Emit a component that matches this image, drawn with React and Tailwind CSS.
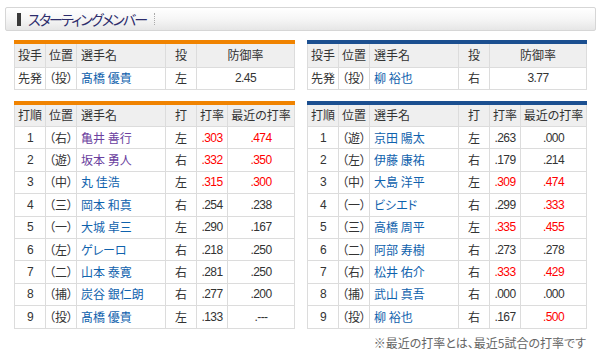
import React from "react";

const blue = "text-[#0f62ad]";
const purple = "text-[#6b3fa0]";

const leftBat = [
  ["1", "（右）", "亀井 善行", "左", ".303", ".474", true, true, true],
  ["2", "（遊）", "坂本 勇人", "右", ".332", ".350", true, true, true],
  ["3", "（中）", "丸 佳浩", "左", ".315", ".300", false, true, true],
  ["4", "（三）", "岡本 和真", "右", ".254", ".238", false, false, false],
  ["5", "（一）", "大城 卓三", "左", ".290", ".167", false, false, false],
  ["6", "（左）", "ゲレーロ", "右", ".218", ".250", false, false, false],
  ["7", "（二）", "山本 泰寛", "右", ".281", ".250", false, false, false],
  ["8", "（捕）", "炭谷 銀仁朗", "右", ".277", ".200", false, false, false],
  ["9", "（投）", "髙橋 優貴", "左", ".133", ".---", false, false, false],
];
const rightBat = [
  ["1", "（遊）", "京田 陽太", "左", ".263", ".000", false, false, false],
  ["2", "（左）", "伊藤 康祐", "右", ".179", ".214", false, false, false],
  ["3", "（中）", "大島 洋平", "左", ".309", ".474", false, true, true],
  ["4", "（一）", "ビシエド", "右", ".299", ".333", false, false, true],
  ["5", "（三）", "高橋 周平", "左", ".335", ".455", false, true, true],
  ["6", "（二）", "阿部 寿樹", "右", ".273", ".278", false, false, false],
  ["7", "（右）", "松井 佑介", "右", ".333", ".429", false, true, true],
  ["8", "（捕）", "武山 真吾", "右", ".000", ".000", false, false, false],
  ["9", "（投）", "柳 裕也", "右", ".167", ".500", false, false, true],
];

const td = "border border-[#dcdcdc] p-0 align-middle";
const th = "border border-[#dcdcdc] p-0 align-middle bg-[#efefef] font-normal";
const num = "font-['Liberation_Sans','Noto_Sans_CJK_JP',sans-serif] tracking-[-0.6px]";

function PitcherTable({ color, name, throws, era }) {
  return (
    <div className={`border-t-[4px] ${color}`}>
      <table className="w-full table-fixed border-collapse text-[12px] text-[#333]">
        <colgroup>
          <col className="w-[31px]" />
          <col className="w-[31px]" />
          <col className="w-[89px]" />
          <col className="w-[31px]" />
          <col />
        </colgroup>
        <thead>
          <tr className="h-[23px]">
            <th className={`${th} border-t-0 text-center`}>投手</th>
            <th className={`${th} border-t-0 text-center`}>位置</th>
            <th className={`${th} border-t-0 text-left pl-[4px]`}>選手名</th>
            <th className={`${th} border-t-0 text-center`}>投</th>
            <th className={`${th} border-t-0 text-center`}>防御率</th>
          </tr>
        </thead>
        <tbody>
          <tr className="h-[22px]">
            <td className={`${td} text-center`}>先発</td>
            <td className={`${td} text-center`}>（投）</td>
            <td className={`${td} text-left pl-[4px] ${blue}`}>{name}</td>
            <td className={`${td} text-center`}>{throws}</td>
            <td className={`${td} text-center ${num}`}>{era}</td>
          </tr>
        </tbody>
      </table>
    </div>
  );
}

function BatTable({ color, rows }) {
  return (
    <div className={`border-t-[4px] ${color}`}>
      <table className="w-full table-fixed border-collapse text-[12px] text-[#333]">
        <colgroup>
          <col className="w-[31px]" />
          <col className="w-[31px]" />
          <col className="w-[89px]" />
          <col className="w-[31px]" />
          <col className="w-[31px]" />
          <col />
        </colgroup>
        <thead>
          <tr className="h-[22px]">
            <th className={`${th} border-t-0 text-center`}>打順</th>
            <th className={`${th} border-t-0 text-center`}>位置</th>
            <th className={`${th} border-t-0 text-left pl-[4px]`}>選手名</th>
            <th className={`${th} border-t-0 text-center`}>打</th>
            <th className={`${th} border-t-0 text-center`}>打率</th>
            <th className={`${th} border-t-0 text-center`}>最近の打率</th>
          </tr>
        </thead>
        <tbody>
          {rows.map((r) => (
            <tr key={r[0]} className="h-[22.4px]">
              <td className={`${td} text-center ${num}`}>{r[0]}</td>
              <td className={`${td} text-center`}>{r[1]}</td>
              <td className={`${td} text-left pl-[4px] ${r[6] ? purple : blue}`}>{r[2]}</td>
              <td className={`${td} text-center`}>{r[3]}</td>
              <td className={`${td} text-center ${num} ${r[7] ? "text-[#ff0000]" : ""}`}>{r[4]}</td>
              <td className={`${td} text-center ${num} ${r[8] ? "text-[#ff0000]" : ""}`}>{r[5]}</td>
            </tr>
          ))}
        </tbody>
      </table>
    </div>
  );
}

export default function App() {
  return (
    <div className="w-[600px] h-[363px] bg-white pt-[7px] px-[5px] font-['Noto_Sans_CJK_JP',sans-serif] [font-feature-settings:'palt']">
      <div className="h-[24px] w-[591px] border border-[#d6d6d6] rounded-[2px] bg-gradient-to-b from-[#ffffff] via-[#f6f6f6] to-[#e6e6e6] flex items-center pl-[11px]">
        <div className="w-[4px] h-[13px] bg-[#3a3a3a]" />
        <div className="ml-[7px] text-[14px] leading-none text-[#2c2c6c] tracking-[-1.8px]">スターティングメンバー</div>
        <div className="ml-[8px] h-[12px] border-l border-dotted border-[#aaaaaa]" />
      </div>
      <div className="px-[9px] mt-[9px] grid grid-cols-[281px_280px] gap-x-[12px]">
        <PitcherTable color="border-[#f08300]" name="髙橋 優貴" throws="左" era="2.45" />
        <PitcherTable color="border-[#1b4f90]" name="柳 裕也" throws="右" era="3.77" />
        <div className="mt-[11px]">
          <BatTable color="border-[#f08300]" rows={leftBat} />
        </div>
        <div className="mt-[11px]">
          <BatTable color="border-[#1b4f90]" rows={rightBat} />
          <div className="text-right text-[12px] text-[#666] mt-[8px] pr-[1px] leading-none">※最近の打率とは、最近5試合の打率です</div>
        </div>
      </div>
    </div>
  );
}
